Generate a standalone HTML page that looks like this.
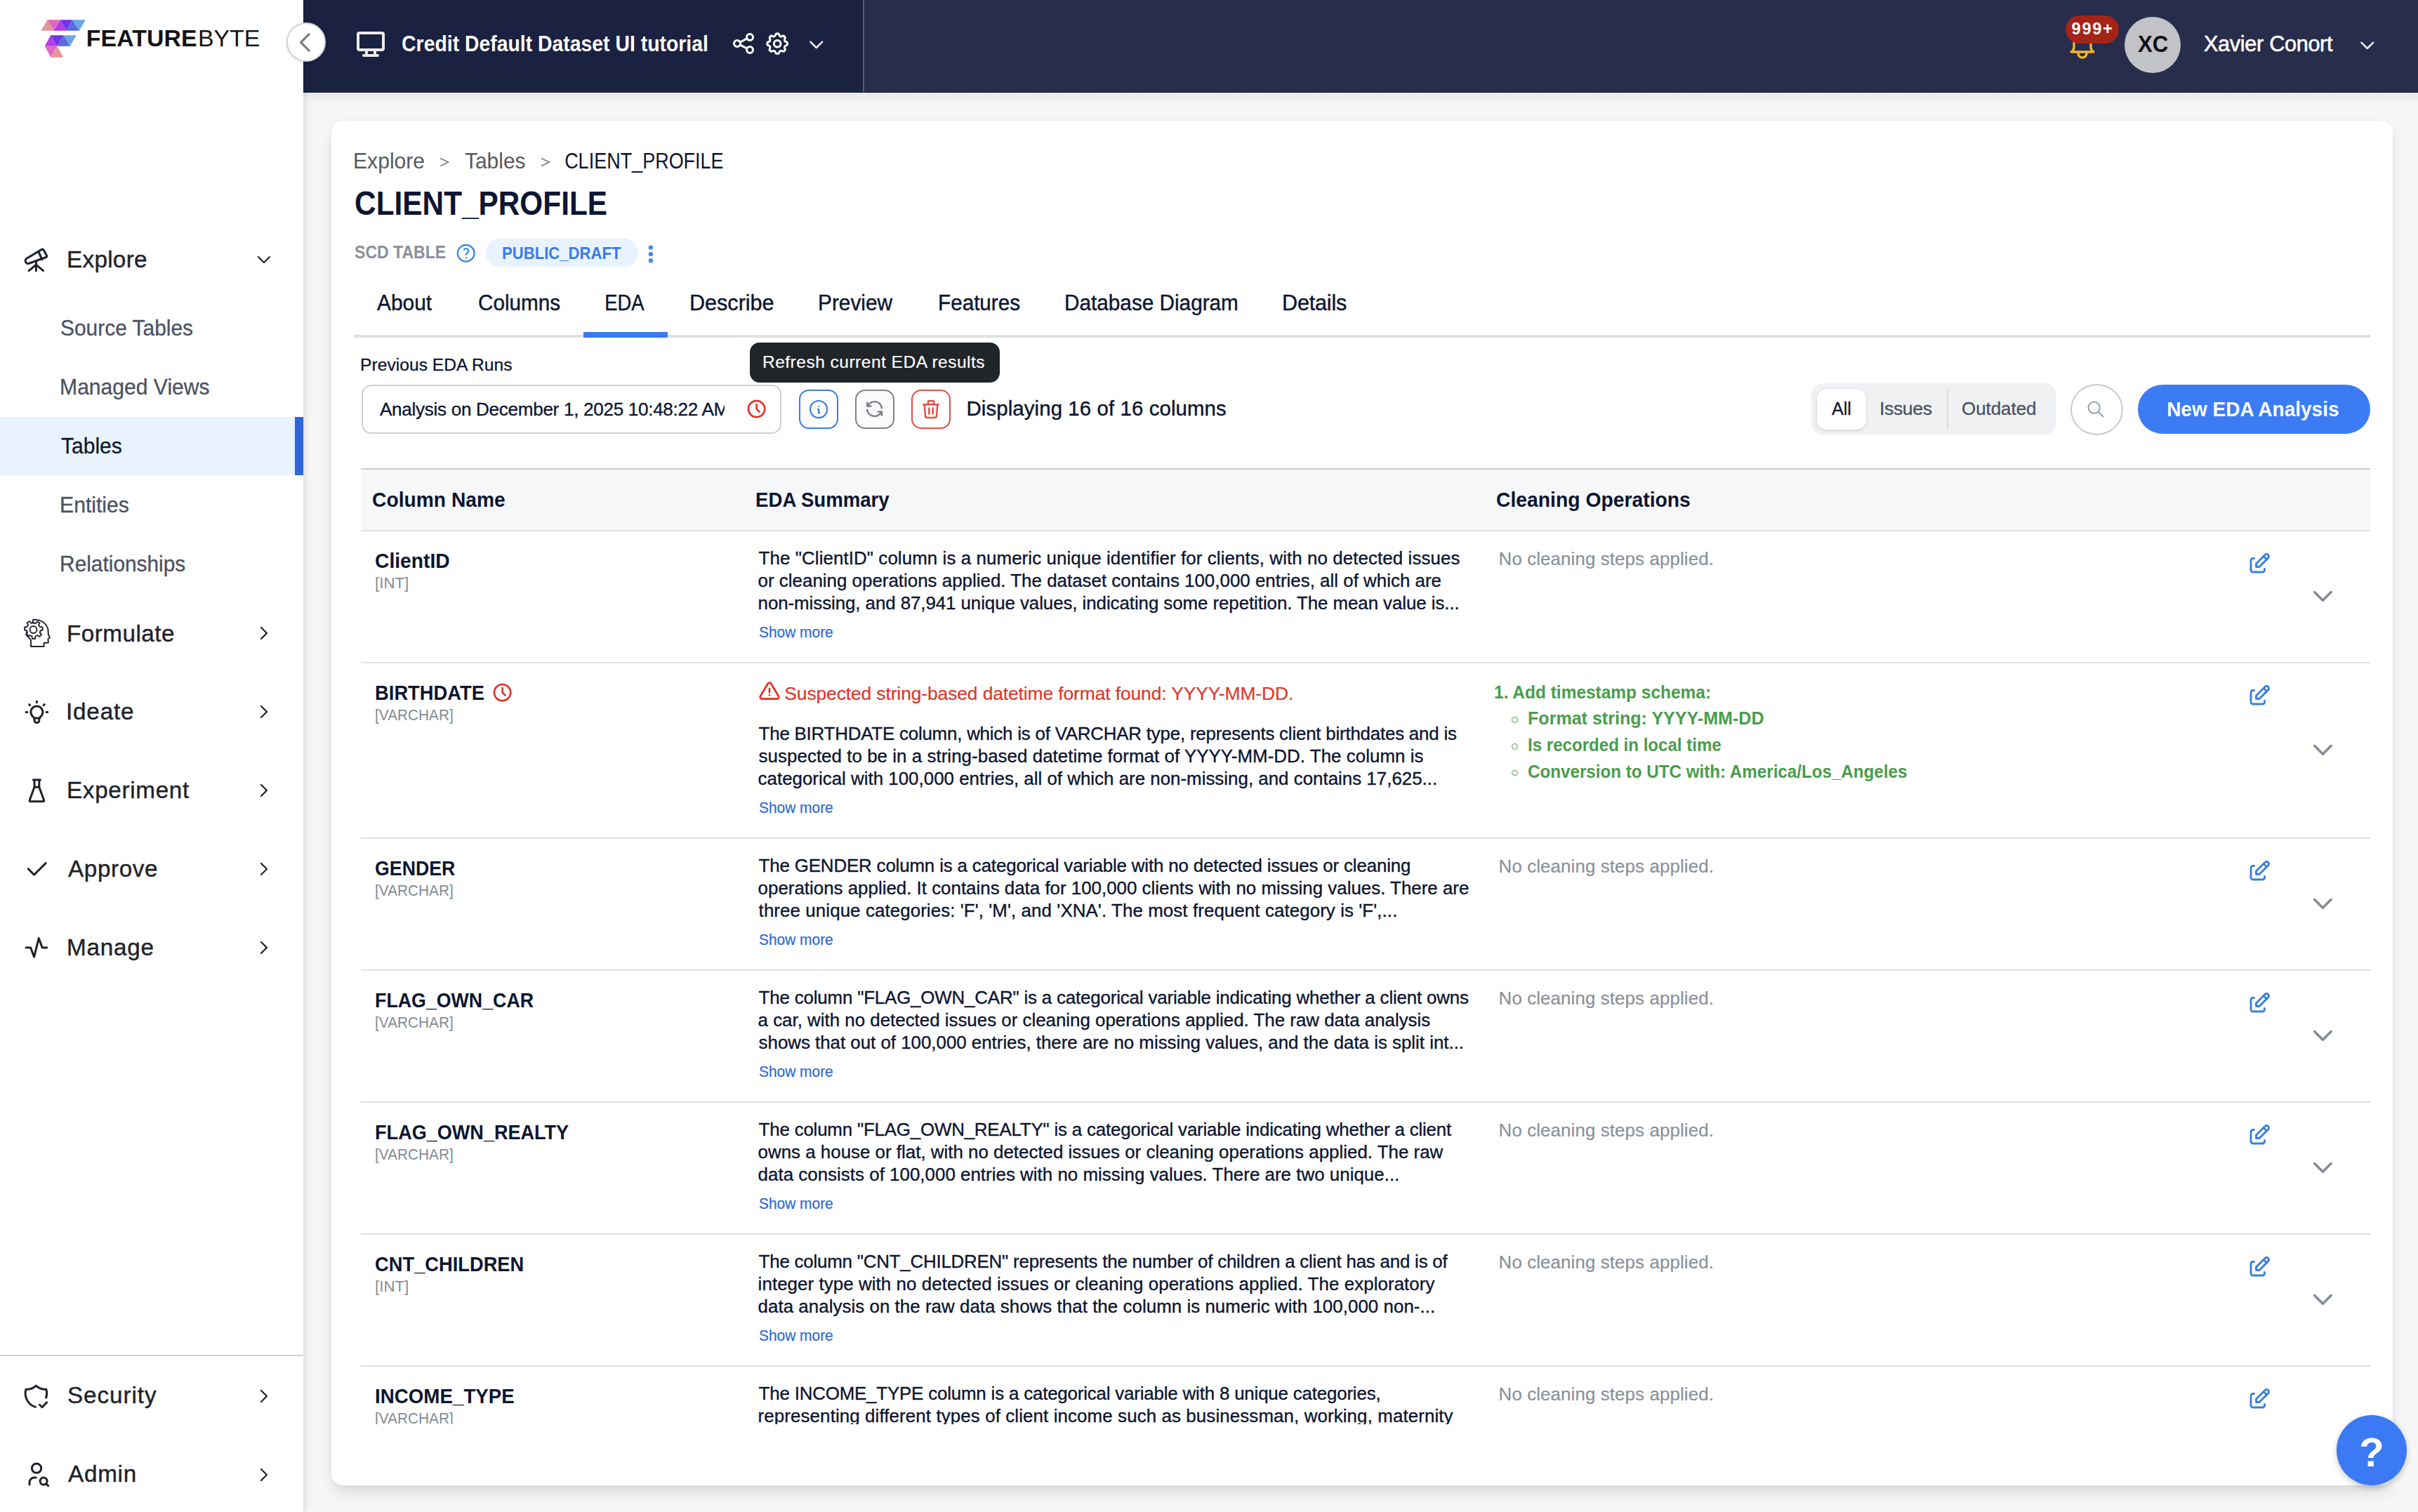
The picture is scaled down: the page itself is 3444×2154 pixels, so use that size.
<!DOCTYPE html>
<html><head><meta charset="utf-8"><title>CLIENT_PROFILE EDA</title>
<style>
html,body{margin:0;padding:0}
body{width:3444px;height:2154px;overflow:hidden;background:#f6f6f6;position:relative;font-family:"Liberation Sans",sans-serif}
.t{position:absolute;white-space:nowrap;z-index:4}
@media (max-width:1900px){body{zoom:0.5}}
</style></head><body>

<!-- sidebar -->
<div style="position:absolute;left:0;top:0;width:432px;height:2154px;background:#fff;z-index:2;box-shadow:2px 0 10px rgba(0,0,0,0.12)"></div>
<svg style="position:absolute;left:0;top:0;z-index:3" width="140" height="100" viewBox="0 0 140 100">
<polygon points="58.3,43.7 67.6,28.2 76.4,43.7" fill="#e39696"/>
<polygon points="67.6,28.2 85.9,28.2 76.4,43.7" fill="#e068c0"/>
<polygon points="76.4,43.7 85.9,28.2 94.7,43.7" fill="#b03ee6"/>
<polygon points="85.9,28.2 103.2,28.2 94.7,43.7" fill="#7433e6"/>
<polygon points="94.7,43.7 103.2,28.2 113,43.7" fill="#5a6ae0"/>
<polygon points="103.2,28.2 121.8,28.2 113,43.7" fill="#6aa6e0"/>
<polygon points="63.7,65.8 72.2,50.2 81.25,65.8" fill="#b03ee6"/>
<polygon points="72.2,50.2 90.5,50.2 81.25,65.8" fill="#7433e6"/>
<polygon points="81.25,65.8 90.5,50.2 99.8,65.8" fill="#5a6ae0"/>
<polygon points="90.5,50.2 108.6,50.2 99.8,65.8" fill="#6aa6e0"/>
<polygon points="63.7,65.8 81.25,65.8 72.5,81.8" fill="#e068c0"/>
<polygon points="72.5,81.8 81.25,65.8 90.5,81.8" fill="#e39696"/>
</svg>
<!-- selected item -->
<div style="position:absolute;left:0;top:594px;width:432px;height:83px;background:#e9f3fd;z-index:3"></div>
<div style="position:absolute;left:420px;top:594px;width:12px;height:83px;background:#2f66d9;z-index:3"></div>
<!-- sidebar separator -->
<div style="position:absolute;left:0;top:1930px;width:432px;height:2px;background:#cdd3db;z-index:3"></div>

<!-- header -->
<div style="position:absolute;left:432px;top:0;width:798px;height:132px;background:#1b2140;z-index:1"></div>
<div style="position:absolute;left:1230px;top:0;width:2214px;height:132px;background:#272d4a;z-index:1"></div>
<div style="position:absolute;left:1229px;top:0;width:2px;height:132px;background:#555b74;z-index:1"></div>
<div style="position:absolute;left:432px;top:131px;width:3012px;height:1px;background:#151a33;z-index:1"></div>
<div style="position:absolute;left:432px;top:132px;width:3012px;height:16px;background:linear-gradient(#e6e8eb,#f6f6f6);z-index:0"></div>
<!-- collapse button -->
<div style="position:absolute;left:408px;top:32px;width:52px;height:52px;border-radius:50%;background:#fff;border:2px solid #cfd4da;z-index:5;box-shadow:0 1px 4px rgba(0,0,0,0.12)"></div>
<!-- notifications -->
<div style="position:absolute;left:2942px;top:22px;width:76px;height:40px;border-radius:20px;background:#a52418;z-index:5"></div>
<div style="position:absolute;left:3026px;top:24px;width:80px;height:80px;border-radius:50%;background:#c2c3c7;z-index:4"></div>


<!-- card -->
<div style="position:absolute;left:472px;top:172px;width:2936px;height:1944px;background:#fff;border-radius:16px;z-index:1;box-shadow:0 12px 22px -4px rgba(0,0,0,0.13), 0 0 6px rgba(0,0,0,0.04)"></div>
<div style="position:absolute;left:691.6px;top:340px;width:217px;height:40px;border-radius:20px;background:#e8f3fd;z-index:2"></div>
<svg style="position:absolute;left:916px;top:345px;z-index:4" width="20" height="36" viewBox="916 345 20 36" fill="#4a8ae0"><circle cx="926.9" cy="352.6" r="3.2"/><circle cx="926.9" cy="361.9" r="3.2"/><circle cx="926.9" cy="371.2" r="3.2"/></svg>
<!-- tabs underline -->
<div style="position:absolute;left:504px;top:477px;width:2872px;height:4px;background:#dde0e5;z-index:2"></div>
<div style="position:absolute;left:831px;top:472.5px;width:120px;height:8.5px;background:#3a78f0;z-index:3"></div>
<!-- tooltip -->
<div style="position:absolute;left:1068px;top:488px;width:356px;height:56.5px;border-radius:14px;background:#212529;z-index:5"></div>
<!-- input -->
<div style="position:absolute;left:515px;top:547.7px;width:594px;height:66px;border-radius:14px;border:2px solid #cbd0d7;background:#fff;z-index:2"></div>
<!-- action buttons -->
<div style="position:absolute;left:1138px;top:555px;width:51.5px;height:52px;border-radius:14px;border:2px solid #3a7ddf;background:#fff;z-index:2"></div>
<div style="position:absolute;left:1218px;top:555px;width:51.5px;height:52px;border-radius:14px;border:2px solid #7d848c;background:#fbfbfc;z-index:2"></div>
<div style="position:absolute;left:1298px;top:555px;width:51.5px;height:52px;border-radius:14px;border:2px solid #e05048;background:#fff;z-index:2"></div>
<!-- segmented -->
<div style="position:absolute;left:2580px;top:545.6px;width:348px;height:73px;border-radius:16px;background:#f0f1f3;z-index:2"></div>
<div style="position:absolute;left:2588px;top:553.6px;width:70px;height:58px;border-radius:14px;background:#fff;z-index:3;box-shadow:0 1px 4px rgba(0,0,0,0.15)"></div>
<div style="position:absolute;left:2773px;top:554px;width:2px;height:57px;background:#d5d8dd;z-index:3"></div>
<!-- search -->
<div style="position:absolute;left:2949.3px;top:547.3px;width:71px;height:69px;border-radius:50%;border:2px solid #c5cad2;background:#fff;z-index:2"></div>

<!-- new eda -->
<div style="position:absolute;left:3044.5px;top:548px;width:331px;height:70px;border-radius:35px;background:#3b7cf4;z-index:2"></div>

<!-- table -->
<div style="position:absolute;left:514px;top:667px;width:2862px;height:2px;background:#c8ced6;z-index:2"></div>
<div style="position:absolute;left:514px;top:669px;width:2862px;height:86px;background:#f6f7f9;z-index:2"></div>
<div style="position:absolute;left:514px;top:755px;width:2862px;height:2px;background:#dcdfe4;z-index:2"></div>

<svg style="position:absolute;left:31.00px;top:349.50px;z-index:4;overflow:visible" width="40.80" height="40.80" viewBox="0 0 24 24" fill="none" stroke="#1f2329" stroke-width="1.765" stroke-linecap="round" stroke-linejoin="round"><path d="M6 21l6 -5l6 5"/><path d="M12 13v8"/><path d="M3.294 13.678l.166 .281c.52 .88 1.624 1.265 2.605 .91l14.242 -5.165a1.023 1.023 0 0 0 .565 -1.456l-2.62 -4.705a1.087 1.087 0 0 0 -1.447 -.42l-.056 .032l-12.694 7.618c-.975 .585 -1.341 1.866 -.76 2.905z"/><path d="M14 5l3 6.5"/></svg>
<svg style="position:absolute;left:360.00px;top:353.50px;z-index:4;overflow:visible" width="31.92" height="31.92" viewBox="0 0 24 24" fill="none" stroke="#1f2329" stroke-width="1.654" stroke-linecap="round" stroke-linejoin="round"><path d="M6 9l6 6l6 -6"/></svg>
<svg style="position:absolute;left:0;top:860px;z-index:4" width="100" height="80" viewBox="0 860 100 80" fill="none" stroke="#1f2329" stroke-width="1.9" stroke-linecap="round" stroke-linejoin="round"><path d="M47,882.8 C56,882 66,886 68.5,897 L68.8,903.5 L71,908.5 L68.5,910 L68.8,915.5 L62.5,916 L62.5,921 L44,921 L44,912 C40,907 38.5,904 37.8,901"/><path d="M46.5,884.5 L48,887.5 L51,888 L53,885.5 L56.5,887.5 L55,890.5 L57,893 L60.5,893.5 L60.8,897.5 L57.5,898.5 L56.8,901.5 L59,904 L56.5,907 L53.5,905 L50.5,906.5 L50,910 L46,910 L45.5,906.5 L42.5,905 L39.5,907 L37,904 L39,901.5 L38.3,898.5 L35,897.5 L35.2,893.5 L38.5,893 L40.2,890 L38.5,887 L42,885 L44,887.8 L46.5,887.5 Z"/><circle cx="47.5" cy="897" r="5"/></svg>
<svg style="position:absolute;left:31.60px;top:994.00px;z-index:4;overflow:visible" width="40.80" height="40.80" viewBox="0 0 24 24" fill="none" stroke="#1f2329" stroke-width="1.765" stroke-linecap="round" stroke-linejoin="round"><path d="M3 12h1m8 -9v1m8 8h1m-15.4 -6.4l.7 .7m12.1 -.7l-.7 .7"/><path d="M9 16a5 5 0 1 1 6 0a3.5 3.5 0 0 0 -1 3a2 2 0 0 1 -4 0a3.5 3.5 0 0 0 -1 -3"/><path d="M9.7 17l4.6 0"/></svg>
<svg style="position:absolute;left:31.60px;top:1105.80px;z-index:4;overflow:visible" width="40.80" height="40.80" viewBox="0 0 24 24" fill="none" stroke="#1f2329" stroke-width="1.765" stroke-linecap="round" stroke-linejoin="round"><path d="M9 3l6 0"/><path d="M10 9l4 0"/><path d="M10 3v6l-4 11a.7 .7 0 0 0 .5 1h11a.7 .7 0 0 0 .5 -1l-4 -11v-6"/></svg>
<svg style="position:absolute;left:32.00px;top:1218.00px;z-index:4;overflow:visible" width="39.84" height="39.84" viewBox="0 0 24 24" fill="none" stroke="#1f2329" stroke-width="1.807" stroke-linecap="round" stroke-linejoin="round"><path d="M5 12l5 5l10 -10"/></svg>
<svg style="position:absolute;left:31.50px;top:1330.00px;z-index:4;overflow:visible" width="39.84" height="39.84" viewBox="0 0 24 24" fill="none" stroke="#1f2329" stroke-width="1.807" stroke-linecap="round" stroke-linejoin="round"><path d="M3 12h4l3 8l4 -16l3 8h4"/></svg>
<svg style="position:absolute;left:30.80px;top:1968.50px;z-index:4;overflow:visible" width="40.80" height="40.80" viewBox="0 0 24 24" fill="none" stroke="#1f2329" stroke-width="1.765" stroke-linecap="round" stroke-linejoin="round"><path d="M11.46 20.846a12 12 0 0 1 -7.96 -14.846a12 12 0 0 0 8.5 -3a12 12 0 0 0 8.5 3a12 12 0 0 1 -.09 7.06"/><path d="M15 19l2 2l4 -4"/></svg>
<svg style="position:absolute;left:31.70px;top:2079.70px;z-index:4;overflow:visible" width="40.08" height="40.08" viewBox="0 0 24 24" fill="none" stroke="#1f2329" stroke-width="1.796" stroke-linecap="round" stroke-linejoin="round"><path d="M8 7a4 4 0 1 0 8 0a4 4 0 0 0 -8 0"/><path d="M6 21v-2a4 4 0 0 1 4 -4h1.5"/><path d="M18 18m-3 0a3 3 0 1 0 6 0a3 3 0 1 0 -6 0"/><path d="M20.2 20.2l1.8 1.8"/></svg>
<svg style="position:absolute;left:359.75px;top:886.00px;z-index:4;overflow:visible" width="31.99" height="31.99" viewBox="0 0 24 24" fill="none" stroke="#1f2329" stroke-width="1.650" stroke-linecap="round" stroke-linejoin="round"><path d="M9 6l6 6l-6 6"/></svg>
<svg style="position:absolute;left:359.75px;top:998.00px;z-index:4;overflow:visible" width="31.99" height="31.99" viewBox="0 0 24 24" fill="none" stroke="#1f2329" stroke-width="1.650" stroke-linecap="round" stroke-linejoin="round"><path d="M9 6l6 6l-6 6"/></svg>
<svg style="position:absolute;left:359.75px;top:1110.00px;z-index:4;overflow:visible" width="31.99" height="31.99" viewBox="0 0 24 24" fill="none" stroke="#1f2329" stroke-width="1.650" stroke-linecap="round" stroke-linejoin="round"><path d="M9 6l6 6l-6 6"/></svg>
<svg style="position:absolute;left:359.75px;top:1222.00px;z-index:4;overflow:visible" width="31.99" height="31.99" viewBox="0 0 24 24" fill="none" stroke="#1f2329" stroke-width="1.650" stroke-linecap="round" stroke-linejoin="round"><path d="M9 6l6 6l-6 6"/></svg>
<svg style="position:absolute;left:359.75px;top:1334.00px;z-index:4;overflow:visible" width="31.99" height="31.99" viewBox="0 0 24 24" fill="none" stroke="#1f2329" stroke-width="1.650" stroke-linecap="round" stroke-linejoin="round"><path d="M9 6l6 6l-6 6"/></svg>
<svg style="position:absolute;left:359.75px;top:1972.50px;z-index:4;overflow:visible" width="31.99" height="31.99" viewBox="0 0 24 24" fill="none" stroke="#1f2329" stroke-width="1.650" stroke-linecap="round" stroke-linejoin="round"><path d="M9 6l6 6l-6 6"/></svg>
<svg style="position:absolute;left:359.75px;top:2084.50px;z-index:4;overflow:visible" width="31.99" height="31.99" viewBox="0 0 24 24" fill="none" stroke="#1f2329" stroke-width="1.650" stroke-linecap="round" stroke-linejoin="round"><path d="M9 6l6 6l-6 6"/></svg>
<svg style="position:absolute;left:410.60px;top:36.80px;z-index:6;overflow:visible" width="46.80" height="46.80" viewBox="0 0 24 24" fill="none" stroke="#7e7e7e" stroke-width="1.641" stroke-linecap="round" stroke-linejoin="round"><path d="M15 6l-6 6l6 6"/></svg>
<svg style="position:absolute;left:600px;top:200px;z-index:4" width="200" height="60" viewBox="600 200 200 60" fill="none" stroke="#858a90" stroke-width="1.9" stroke-linejoin="miter"><path d="M627.3,225.6 L638.3,231 L627.3,236.4"/><path d="M771.1,225.6 L782.1,231 L771.1,236.4"/></svg>
<svg style="position:absolute;left:503.90px;top:38.80px;z-index:4;overflow:visible" width="48.00" height="48.00" viewBox="0 0 24 24" fill="none" stroke="#ebebeb" stroke-width="2.000" stroke-linecap="round" stroke-linejoin="round"><path d="M3 5a1 1 0 0 1 1 -1h16a1 1 0 0 1 1 1v10a1 1 0 0 1 -1 1h-16a1 1 0 0 1 -1 -1v-10z"/><path d="M7 20h10"/><path d="M9 16v4"/><path d="M15 16v4"/></svg>
<svg style="position:absolute;left:1040.90px;top:43.70px;z-index:4;overflow:visible" width="36.00" height="36.00" viewBox="0 0 24 24" fill="none" stroke="#ffffff" stroke-width="2.000" stroke-linecap="round" stroke-linejoin="round"><path d="M6 12m-3 0a3 3 0 1 0 6 0a3 3 0 1 0 -6 0"/><path d="M18 6m-3 0a3 3 0 1 0 6 0a3 3 0 1 0 -6 0"/><path d="M18 18m-3 0a3 3 0 1 0 6 0a3 3 0 1 0 -6 0"/><path d="M8.7 10.7l6.6 -3.4"/><path d="M8.7 13.3l6.6 3.4"/></svg>
<svg style="position:absolute;left:1087.80px;top:42.60px;z-index:4;overflow:visible" width="38.40" height="38.40" viewBox="0 0 24 24" fill="none" stroke="#ffffff" stroke-width="1.875" stroke-linecap="round" stroke-linejoin="round"><path d="M10.325 4.317c.426 -1.756 2.924 -1.756 3.35 0a1.724 1.724 0 0 0 2.573 1.066c1.543 -.94 3.31 .826 2.37 2.37a1.724 1.724 0 0 0 1.065 2.572c1.756 .426 1.756 2.924 0 3.35a1.724 1.724 0 0 0 -1.066 2.573c.94 1.543 -.826 3.31 -2.37 2.37a1.724 1.724 0 0 0 -2.572 1.065c-.426 1.756 -2.924 1.756 -3.35 0a1.724 1.724 0 0 0 -2.573 -1.066c-1.543 .94 -3.31 -.826 -2.37 -2.37a1.724 1.724 0 0 0 -1.065 -2.572c-1.756 -.426 -1.756 -2.924 0 -3.35a1.724 1.724 0 0 0 1.066 -2.573c-.94 -1.543 .826 -3.31 2.37 -2.37c1 .608 2.296 .07 2.572 -1.065z"/><path d="M9 12a3 3 0 1 0 6 0a3 3 0 0 0 -6 0"/></svg>
<svg style="position:absolute;left:1146.20px;top:47.20px;z-index:4;overflow:visible" width="33.60" height="33.60" viewBox="0 0 24 24" fill="none" stroke="#e8e8e8" stroke-width="1.857" stroke-linecap="round" stroke-linejoin="round"><path d="M6 9l6 6l6 -6"/></svg>
<svg style="position:absolute;left:2942.00px;top:39.70px;z-index:4;overflow:visible" width="48.00" height="48.00" viewBox="0 0 24 24" fill="none" stroke="#f0b232" stroke-width="1.700" stroke-linecap="round" stroke-linejoin="round"><path d="M10 5a2 2 0 1 1 4 0a7 7 0 0 1 4 6v3a4 4 0 0 0 2 3h-16a4 4 0 0 0 2 -3v-3a7 7 0 0 1 4 -6"/><path d="M9 17v1a3 3 0 0 0 6 0v-1"/></svg>
<svg style="position:absolute;left:3354.70px;top:47.70px;z-index:4;overflow:visible" width="33.60" height="33.60" viewBox="0 0 24 24" fill="none" stroke="#e8e8e8" stroke-width="1.857" stroke-linecap="round" stroke-linejoin="round"><path d="M6 9l6 6l6 -6"/></svg>
<svg style="position:absolute;left:648.10px;top:344.70px;z-index:4;overflow:visible" width="31.44" height="31.44" viewBox="0 0 24 24" fill="none" stroke="#3d8ddf" stroke-width="1.832" stroke-linecap="round" stroke-linejoin="round"><path d="M3 12a9 9 0 1 0 18 0a9 9 0 0 0 -18 0"/><path d="M12 17l0 .01"/><path d="M12 13.5a1.5 1.5 0 0 1 1 -1.5a2.6 2.6 0 1 0 -3 -4"/></svg>
<svg style="position:absolute;left:1061.90px;top:567.40px;z-index:4;overflow:visible" width="31.20" height="31.20" viewBox="0 0 24 24" fill="none" stroke="#e3302a" stroke-width="2.000" stroke-linecap="round" stroke-linejoin="round"><path d="M3 12a9 9 0 1 0 18 0a9 9 0 0 0 -18 0"/><path d="M12 7v5l3 3"/></svg>
<svg style="position:absolute;left:1149.90px;top:566.60px;z-index:4;overflow:visible" width="32.16" height="32.16" viewBox="0 0 24 24" fill="none" stroke="#3a7ddf" stroke-width="1.642" stroke-linecap="round" stroke-linejoin="round"><path d="M3 12a9 9 0 1 0 18 0a9 9 0 0 0 -18 0"/><path d="M12 9h.01"/><path d="M11 12h1v4h1"/></svg>
<svg style="position:absolute;left:1230.40px;top:567.10px;z-index:4;overflow:visible" width="31.20" height="31.20" viewBox="0 0 24 24" fill="none" stroke="#7d848c" stroke-width="2.000" stroke-linecap="round" stroke-linejoin="round"><path d="M20 11a8.1 8.1 0 0 0 -15.5 -2m-.5 -4v4h4"/><path d="M4 13a8.1 8.1 0 0 0 15.5 2m.5 4v-4h-4"/></svg>
<svg style="position:absolute;left:1310.00px;top:567.30px;z-index:4;overflow:visible" width="31.92" height="31.92" viewBox="0 0 24 24" fill="none" stroke="#e05048" stroke-width="1.880" stroke-linecap="round" stroke-linejoin="round"><path d="M4 7l16 0"/><path d="M10 11l0 6"/><path d="M14 11l0 6"/><path d="M5 7l1 12a2 2 0 0 0 2 2h8a2 2 0 0 0 2 -2l1 -12"/><path d="M9 7v-3a1 1 0 0 1 1 -1h4a1 1 0 0 1 1 1v3"/></svg>
<svg style="position:absolute;left:2970.70px;top:568.80px;z-index:4;overflow:visible" width="28.08" height="28.08" viewBox="0 0 24 24" fill="none" stroke="#9ca2aa" stroke-width="1.795" stroke-linecap="round" stroke-linejoin="round"><path d="M10 10m-7 0a7 7 0 1 0 14 0a7 7 0 1 0 -14 0"/><path d="M21 21l-6 -6"/></svg>
<div style="position:absolute;left:514px;top:943px;width:2862px;height:2px;background:#dfe2e6;z-index:2"></div>
<svg style="position:absolute;left:3200.00px;top:784.90px;z-index:4;overflow:visible" width="36.00" height="36.00" viewBox="0 0 24 24" fill="none" stroke="#3a80dc" stroke-width="1.933" stroke-linecap="round" stroke-linejoin="round"><path d="M7 7h-1a2 2 0 0 0 -2 2v9a2 2 0 0 0 2 2h9a2 2 0 0 0 2 -2v-1"/><path d="M20.385 6.585a2.1 2.1 0 0 0 -2.97 -2.97l-8.415 8.385v3h3l8.385 -8.415z"/><path d="M16 5l3 3"/></svg>
<svg style="position:absolute;left:3284.90px;top:825.60px;z-index:4;overflow:visible" width="46.80" height="46.80" viewBox="0 0 24 24" fill="none" stroke="#868c94" stroke-width="1.846" stroke-linecap="round" stroke-linejoin="round"><path d="M6 9l6 6l6 -6"/></svg>
<div style="position:absolute;left:514px;top:1193px;width:2862px;height:2px;background:#dfe2e6;z-index:2"></div>
<svg style="position:absolute;left:3200.00px;top:972.90px;z-index:4;overflow:visible" width="36.00" height="36.00" viewBox="0 0 24 24" fill="none" stroke="#3a80dc" stroke-width="1.933" stroke-linecap="round" stroke-linejoin="round"><path d="M7 7h-1a2 2 0 0 0 -2 2v9a2 2 0 0 0 2 2h9a2 2 0 0 0 2 -2v-1"/><path d="M20.385 6.585a2.1 2.1 0 0 0 -2.97 -2.97l-8.415 8.385v3h3l8.385 -8.415z"/><path d="M16 5l3 3"/></svg>
<svg style="position:absolute;left:3284.90px;top:1044.60px;z-index:4;overflow:visible" width="46.80" height="46.80" viewBox="0 0 24 24" fill="none" stroke="#868c94" stroke-width="1.846" stroke-linecap="round" stroke-linejoin="round"><path d="M6 9l6 6l6 -6"/></svg>
<svg style="position:absolute;left:700.40px;top:971.20px;z-index:4;overflow:visible" width="31.20" height="31.20" viewBox="0 0 24 24" fill="none" stroke="#e52b1c" stroke-width="1.923" stroke-linecap="round" stroke-linejoin="round"><path d="M3 12a9 9 0 1 0 18 0a9 9 0 0 0 -18 0"/><path d="M12 7v5l3 3"/></svg>
<svg style="position:absolute;left:1079.70px;top:969.20px;z-index:4;overflow:visible" width="31.92" height="31.92" viewBox="0 0 24 24" fill="none" stroke="#e52b1c" stroke-width="1.955" stroke-linecap="round" stroke-linejoin="round"><path d="M12 9v4"/><path d="M10.363 3.591l-8.106 13.534a1.914 1.914 0 0 0 1.636 2.871h16.214a1.914 1.914 0 0 0 1.636 -2.87l-8.106 -13.536a1.914 1.914 0 0 0 -3.274 0z"/><path d="M12 16h.01"/></svg>
<div style="position:absolute;left:2153.2px;top:1021.1000000000001px;width:6.9px;height:6.9px;border:1.4px solid #4a9d4c;border-radius:50%;z-index:4"></div>
<div style="position:absolute;left:2153.2px;top:1058.8000000000002px;width:6.9px;height:6.9px;border:1.4px solid #4a9d4c;border-radius:50%;z-index:4"></div>
<div style="position:absolute;left:2153.2px;top:1096.5000000000002px;width:6.9px;height:6.9px;border:1.4px solid #4a9d4c;border-radius:50%;z-index:4"></div>
<div style="position:absolute;left:514px;top:1381px;width:2862px;height:2px;background:#dfe2e6;z-index:2"></div>
<svg style="position:absolute;left:3200.00px;top:1222.90px;z-index:4;overflow:visible" width="36.00" height="36.00" viewBox="0 0 24 24" fill="none" stroke="#3a80dc" stroke-width="1.933" stroke-linecap="round" stroke-linejoin="round"><path d="M7 7h-1a2 2 0 0 0 -2 2v9a2 2 0 0 0 2 2h9a2 2 0 0 0 2 -2v-1"/><path d="M20.385 6.585a2.1 2.1 0 0 0 -2.97 -2.97l-8.415 8.385v3h3l8.385 -8.415z"/><path d="M16 5l3 3"/></svg>
<svg style="position:absolute;left:3284.90px;top:1263.60px;z-index:4;overflow:visible" width="46.80" height="46.80" viewBox="0 0 24 24" fill="none" stroke="#868c94" stroke-width="1.846" stroke-linecap="round" stroke-linejoin="round"><path d="M6 9l6 6l6 -6"/></svg>
<div style="position:absolute;left:514px;top:1569px;width:2862px;height:2px;background:#dfe2e6;z-index:2"></div>
<svg style="position:absolute;left:3200.00px;top:1410.90px;z-index:4;overflow:visible" width="36.00" height="36.00" viewBox="0 0 24 24" fill="none" stroke="#3a80dc" stroke-width="1.933" stroke-linecap="round" stroke-linejoin="round"><path d="M7 7h-1a2 2 0 0 0 -2 2v9a2 2 0 0 0 2 2h9a2 2 0 0 0 2 -2v-1"/><path d="M20.385 6.585a2.1 2.1 0 0 0 -2.97 -2.97l-8.415 8.385v3h3l8.385 -8.415z"/><path d="M16 5l3 3"/></svg>
<svg style="position:absolute;left:3284.90px;top:1451.60px;z-index:4;overflow:visible" width="46.80" height="46.80" viewBox="0 0 24 24" fill="none" stroke="#868c94" stroke-width="1.846" stroke-linecap="round" stroke-linejoin="round"><path d="M6 9l6 6l6 -6"/></svg>
<div style="position:absolute;left:514px;top:1757px;width:2862px;height:2px;background:#dfe2e6;z-index:2"></div>
<svg style="position:absolute;left:3200.00px;top:1598.90px;z-index:4;overflow:visible" width="36.00" height="36.00" viewBox="0 0 24 24" fill="none" stroke="#3a80dc" stroke-width="1.933" stroke-linecap="round" stroke-linejoin="round"><path d="M7 7h-1a2 2 0 0 0 -2 2v9a2 2 0 0 0 2 2h9a2 2 0 0 0 2 -2v-1"/><path d="M20.385 6.585a2.1 2.1 0 0 0 -2.97 -2.97l-8.415 8.385v3h3l8.385 -8.415z"/><path d="M16 5l3 3"/></svg>
<svg style="position:absolute;left:3284.90px;top:1639.60px;z-index:4;overflow:visible" width="46.80" height="46.80" viewBox="0 0 24 24" fill="none" stroke="#868c94" stroke-width="1.846" stroke-linecap="round" stroke-linejoin="round"><path d="M6 9l6 6l6 -6"/></svg>
<div style="position:absolute;left:514px;top:1945px;width:2862px;height:2px;background:#dfe2e6;z-index:2"></div>
<svg style="position:absolute;left:3200.00px;top:1786.90px;z-index:4;overflow:visible" width="36.00" height="36.00" viewBox="0 0 24 24" fill="none" stroke="#3a80dc" stroke-width="1.933" stroke-linecap="round" stroke-linejoin="round"><path d="M7 7h-1a2 2 0 0 0 -2 2v9a2 2 0 0 0 2 2h9a2 2 0 0 0 2 -2v-1"/><path d="M20.385 6.585a2.1 2.1 0 0 0 -2.97 -2.97l-8.415 8.385v3h3l8.385 -8.415z"/><path d="M16 5l3 3"/></svg>
<svg style="position:absolute;left:3284.90px;top:1827.60px;z-index:4;overflow:visible" width="46.80" height="46.80" viewBox="0 0 24 24" fill="none" stroke="#868c94" stroke-width="1.846" stroke-linecap="round" stroke-linejoin="round"><path d="M6 9l6 6l6 -6"/></svg>
<svg style="position:absolute;left:3200.00px;top:1974.90px;z-index:4;overflow:visible" width="36.00" height="36.00" viewBox="0 0 24 24" fill="none" stroke="#3a80dc" stroke-width="1.933" stroke-linecap="round" stroke-linejoin="round"><path d="M7 7h-1a2 2 0 0 0 -2 2v9a2 2 0 0 0 2 2h9a2 2 0 0 0 2 -2v-1"/><path d="M20.385 6.585a2.1 2.1 0 0 0 -2.97 -2.97l-8.415 8.385v3h3l8.385 -8.415z"/><path d="M16 5l3 3"/></svg>
<svg style="position:absolute;left:3284.90px;top:2015.60px;z-index:4;overflow:visible" width="46.80" height="46.80" viewBox="0 0 24 24" fill="none" stroke="#868c94" stroke-width="1.846" stroke-linecap="round" stroke-linejoin="round"><path d="M6 9l6 6l6 -6"/></svg>
<div style="position:absolute;left:514px;top:2029px;width:2862px;height:72px;background:#fff;z-index:5"></div>
<div style="position:absolute;left:3328px;top:2016px;width:100px;height:100px;border-radius:50%;background:#3b7af4;z-index:7;box-shadow:0 3px 8px rgba(0,0,0,0.22)"></div>
<div style="position:absolute;left:3328px;top:2039.90px;width:100px;text-align:center;font-size:58px;line-height:58px;font-weight:bold;color:#fff;z-index:8;letter-spacing:0">?</div>
<div class="t" id="t0" style="left:122.70px;top:37.98px;font-size:33.81px;line-height:33.81px;color:#141414;font-weight:bold;letter-spacing:0.126px">FEATURE</div>
<div class="t" id="t1" style="left:282.00px;top:37.98px;font-size:33.81px;line-height:33.81px;color:#141414;letter-spacing:-0.010px">BYTE</div>
<div class="t" id="t2" style="left:571.70px;top:47.13px;font-size:31.27px;line-height:31.27px;color:#ffffff;font-weight:bold;transform:scaleX(0.9076);transform-origin:1.00px 0">Credit Default Dataset UI tutorial</div>
<div class="t" id="t3" style="left:2950.60px;top:29.96px;font-size:23.67px;line-height:23.67px;color:#ffffff;font-weight:bold;letter-spacing:1.644px;z-index:6">999+</div>
<div class="t" id="t4" style="left:3044.70px;top:46.98px;font-size:32.75px;line-height:32.75px;color:#101010;font-weight:bold;transform:scaleX(0.9522);transform-origin:0.00px 0">XC</div>
<div class="t" id="t5" style="left:3139.00px;top:47.06px;font-size:30.64px;line-height:30.64px;color:#ffffff;letter-spacing:-0.310px;-webkit-text-stroke:0.6px #fff">Xavier Conort</div>
<div class="t" id="t6" style="left:95.00px;top:352.83px;font-size:33.28px;line-height:33.28px;color:#1f2329;letter-spacing:0.285px;-webkit-text-stroke:0.4px #1f2329">Explore</div>
<div class="t" id="t7" style="left:86.00px;top:452.11px;font-size:31.17px;line-height:31.17px;color:#4b5262;transform:scaleX(0.9599);transform-origin:1.00px 0;-webkit-text-stroke:0.3px #4b5262">Source Tables</div>
<div class="t" id="t8" style="left:85.00px;top:536.21px;font-size:31.17px;line-height:31.17px;color:#4b5262;transform:scaleX(0.9655);transform-origin:2.00px 0;-webkit-text-stroke:0.3px #4b5262">Managed Views</div>
<div class="t" id="t9" style="left:87.00px;top:619.61px;font-size:31.17px;line-height:31.17px;color:#0f1a35;transform:scaleX(0.9644);transform-origin:0.00px 0;-webkit-text-stroke:0.3px #0f1a35">Tables</div>
<div class="t" id="t10" style="left:85.00px;top:703.61px;font-size:31.17px;line-height:31.17px;color:#4b5262;transform:scaleX(0.9669);transform-origin:2.00px 0;-webkit-text-stroke:0.3px #4b5262">Entities</div>
<div class="t" id="t11" style="left:85.00px;top:787.61px;font-size:31.17px;line-height:31.17px;color:#4b5262;transform:scaleX(0.9579);transform-origin:2.00px 0;-webkit-text-stroke:0.3px #4b5262">Relationships</div>
<div class="t" id="t12" style="left:95.00px;top:885.53px;font-size:33.28px;line-height:33.28px;color:#1f2329;letter-spacing:0.470px;-webkit-text-stroke:0.4px #1f2329">Formulate</div>
<div class="t" id="t13" style="left:94.00px;top:996.63px;font-size:33.28px;line-height:33.28px;color:#1f2329;letter-spacing:0.803px;-webkit-text-stroke:0.4px #1f2329">Ideate</div>
<div class="t" id="t14" style="left:95.00px;top:1108.83px;font-size:33.28px;line-height:33.28px;color:#1f2329;letter-spacing:0.666px;-webkit-text-stroke:0.4px #1f2329">Experiment</div>
<div class="t" id="t15" style="left:97.00px;top:1220.83px;font-size:33.28px;line-height:33.28px;color:#1f2329;letter-spacing:0.600px;-webkit-text-stroke:0.4px #1f2329">Approve</div>
<div class="t" id="t16" style="left:95.00px;top:1332.53px;font-size:33.28px;line-height:33.28px;color:#1f2329;letter-spacing:0.757px;-webkit-text-stroke:0.4px #1f2329">Manage</div>
<div class="t" id="t17" style="left:96.00px;top:1971.43px;font-size:33.28px;line-height:33.28px;color:#1f2329;letter-spacing:0.924px;-webkit-text-stroke:0.4px #1f2329">Security</div>
<div class="t" id="t18" style="left:97.00px;top:2083.43px;font-size:33.28px;line-height:33.28px;color:#1f2329;letter-spacing:0.728px;-webkit-text-stroke:0.4px #1f2329">Admin</div>
<div class="t" id="t19" style="left:503.00px;top:214.11px;font-size:31.06px;line-height:31.06px;color:#58595c;transform:scaleX(0.9686);transform-origin:2.00px 0">Explore</div>
<div class="t" id="t20" style="left:661.60px;top:214.11px;font-size:31.06px;line-height:31.06px;color:#58595c;transform:scaleX(0.9639);transform-origin:0.00px 0">Tables</div>
<div class="t" id="t21" style="left:804.00px;top:214.11px;font-size:31.06px;line-height:31.06px;color:#0d1530;transform:scaleX(0.8694);transform-origin:1.00px 0">CLIENT_PROFILE</div>
<div class="t" id="t22" style="left:504.50px;top:266.26px;font-size:47.54px;line-height:47.54px;color:#0d1530;font-weight:bold;transform:scaleX(0.8908);transform-origin:1.00px 0">CLIENT_PROFILE</div>
<div class="t" id="t23" style="left:505.00px;top:346.80px;font-size:25.04px;line-height:25.04px;color:#8a9099;font-weight:bold;transform:scaleX(0.9212);transform-origin:0.00px 0">SCD TABLE</div>
<div class="t" id="t24" style="left:714.70px;top:349.53px;font-size:23.24px;line-height:23.24px;color:#3a7be8;font-weight:bold;transform:scaleX(0.9512);transform-origin:1.00px 0">PUBLIC_DRAFT</div>
<div class="t" id="t25" style="left:537.00px;top:415.56px;font-size:30.64px;line-height:30.64px;color:#0d1530;transform:scaleX(0.9761);transform-origin:0.00px 0;-webkit-text-stroke:0.4px #0d1530">About</div>
<div class="t" id="t26" style="left:680.80px;top:415.56px;font-size:30.64px;line-height:30.64px;color:#0d1530;transform:scaleX(0.9697);transform-origin:1.00px 0;-webkit-text-stroke:0.4px #0d1530">Columns</div>
<div class="t" id="t27" style="left:861.00px;top:415.56px;font-size:30.64px;line-height:30.64px;color:#0d1530;transform:scaleX(0.8937);transform-origin:2.00px 0;-webkit-text-stroke:0.4px #0d1530">EDA</div>
<div class="t" id="t28" style="left:982.00px;top:415.56px;font-size:30.64px;line-height:30.64px;color:#0d1530;letter-spacing:-0.030px;-webkit-text-stroke:0.4px #0d1530">Describe</div>
<div class="t" id="t29" style="left:1165.00px;top:415.56px;font-size:30.64px;line-height:30.64px;color:#0d1530;transform:scaleX(0.9721);transform-origin:2.00px 0;-webkit-text-stroke:0.4px #0d1530">Preview</div>
<div class="t" id="t30" style="left:1336.00px;top:415.56px;font-size:30.64px;line-height:30.64px;color:#0d1530;transform:scaleX(0.9676);transform-origin:2.00px 0;-webkit-text-stroke:0.4px #0d1530">Features</div>
<div class="t" id="t31" style="left:1516.00px;top:415.56px;font-size:30.64px;line-height:30.64px;color:#0d1530;transform:scaleX(0.9705);transform-origin:2.00px 0;-webkit-text-stroke:0.4px #0d1530">Database Diagram</div>
<div class="t" id="t32" style="left:1826.00px;top:415.56px;font-size:30.64px;line-height:30.64px;color:#0d1530;letter-spacing:-0.216px;-webkit-text-stroke:0.4px #0d1530">Details</div>
<div class="t" id="t33" style="left:513.00px;top:508.16px;font-size:24.62px;line-height:24.62px;color:#0d1530;letter-spacing:0.027px;-webkit-text-stroke:0.3px #0d1530">Previous EDA Runs</div>
<div class="t" id="t34" style="left:1086.00px;top:504.15px;font-size:24.51px;line-height:24.51px;color:#ffffff;letter-spacing:0.498px;z-index:6;-webkit-text-stroke:0.2px #fff">Refresh current EDA results</div>
<div class="t" id="t35" style="left:541.00px;top:569.91px;font-size:26.10px;line-height:26.10px;color:#0d1530;letter-spacing:-0.304px;clip-path:inset(-10px 6px -10px -10px);-webkit-text-stroke:0.3px #0d1530">Analysis on December 1, 2025 10:48:22 AM</div>
<div class="t" id="t36" style="left:1376.50px;top:567.44px;font-size:29.37px;line-height:29.37px;color:#0d1530;letter-spacing:0.115px;-webkit-text-stroke:0.4px #0d1530">Displaying 16 of 16 columns</div>
<div class="t" id="t37" style="left:2608.60px;top:569.27px;font-size:26.62px;line-height:26.62px;color:#0d1530;transform:scaleX(0.9456);transform-origin:0.00px 0;-webkit-text-stroke:0.3px #0d1530">All</div>
<div class="t" id="t38" style="left:2677.00px;top:569.27px;font-size:26.62px;line-height:26.62px;color:#4a5260;letter-spacing:-0.380px;-webkit-text-stroke:0.3px #4a5260">Issues</div>
<div class="t" id="t39" style="left:2794.00px;top:569.27px;font-size:26.62px;line-height:26.62px;color:#4a5260;transform:scaleX(0.9723);transform-origin:1.00px 0;-webkit-text-stroke:0.3px #4a5260">Outdated</div>
<div class="t" id="t40" style="left:3086.00px;top:567.93px;font-size:30.32px;line-height:30.32px;color:#ffffff;font-weight:bold;transform:scaleX(0.9238);transform-origin:2.00px 0">New EDA Analysis</div>
<div class="t" id="t41" style="left:530.00px;top:697.44px;font-size:29.37px;line-height:29.37px;color:#0d1530;font-weight:bold;transform:scaleX(0.9614);transform-origin:1.00px 0">Column Name</div>
<div class="t" id="t42" style="left:1075.70px;top:697.44px;font-size:29.37px;line-height:29.37px;color:#0d1530;font-weight:bold;transform:scaleX(0.9395);transform-origin:1.00px 0">EDA Summary</div>
<div class="t" id="t43" style="left:2131.00px;top:697.44px;font-size:29.37px;line-height:29.37px;color:#0d1530;font-weight:bold;transform:scaleX(0.9640);transform-origin:1.00px 0">Cleaning Operations</div>
<div class="t" id="t44" style="left:534.00px;top:784.16px;font-size:29.58px;line-height:29.58px;color:#0d1530;font-weight:bold;transform:scaleX(0.9540);transform-origin:1.00px 0">ClientID</div>
<div class="t" id="t45" style="left:534.00px;top:819.52px;font-size:22.19px;line-height:22.19px;color:#848b94;letter-spacing:0.024px">[INT]</div>
<div class="t" id="t46" style="left:1080.60px;top:783.09px;font-size:25.88px;line-height:25.88px;color:#0d1530;letter-spacing:0.093px;-webkit-text-stroke:0.35px #0d1530">The "ClientID" column is a numeric unique identifier for clients, with no detected issues</div>
<div class="t" id="t47" style="left:1079.60px;top:815.09px;font-size:25.88px;line-height:25.88px;color:#0d1530;letter-spacing:0.017px;-webkit-text-stroke:0.35px #0d1530">or cleaning operations applied. The dataset contains 100,000 entries, all of which are</div>
<div class="t" id="t48" style="left:1079.60px;top:847.09px;font-size:25.88px;line-height:25.88px;color:#0d1530;letter-spacing:-0.068px;-webkit-text-stroke:0.35px #0d1530">non-missing, and 87,941 unique values, indicating some repetition. The mean value is...</div>
<div class="t" id="t49" style="left:1080.60px;top:889.96px;font-size:21.66px;line-height:21.66px;color:#2f6bd9;transform:scaleX(0.9654);transform-origin:0.00px 0;-webkit-text-stroke:0.25px #2f6bd9">Show more</div>
<div class="t" id="t50" style="left:2134.60px;top:784.09px;font-size:25.88px;line-height:25.88px;color:#8a9099;letter-spacing:0.111px;-webkit-text-stroke:0.2px #8a9099">No cleaning steps applied.</div>
<div class="t" id="t51" style="left:534.00px;top:972.16px;font-size:29.58px;line-height:29.58px;color:#0d1530;font-weight:bold;transform:scaleX(0.9236);transform-origin:1.00px 0">BIRTHDATE</div>
<div class="t" id="t52" style="left:534.00px;top:1007.52px;font-size:22.19px;line-height:22.19px;color:#848b94;transform:scaleX(0.9367);transform-origin:1.00px 0">[VARCHAR]</div>
<div class="t" id="t53" style="left:1117.30px;top:974.64px;font-size:26.41px;line-height:26.41px;color:#e0352b;letter-spacing:-0.106px;-webkit-text-stroke:0.2px #e0352b">Suspected string-based datetime format found: YYYY-MM-DD.</div>
<div class="t" id="t54" style="left:1080.60px;top:1032.89px;font-size:25.88px;line-height:25.88px;color:#0d1530;letter-spacing:-0.203px;-webkit-text-stroke:0.35px #0d1530">The BIRTHDATE column, which is of VARCHAR type, represents client birthdates and is</div>
<div class="t" id="t55" style="left:1080.60px;top:1064.89px;font-size:25.88px;line-height:25.88px;color:#0d1530;letter-spacing:0.051px;-webkit-text-stroke:0.35px #0d1530">suspected to be in a string-based datetime format of YYYY-MM-DD. The column is</div>
<div class="t" id="t56" style="left:1079.60px;top:1096.89px;font-size:25.88px;line-height:25.88px;color:#0d1530;letter-spacing:0.012px;-webkit-text-stroke:0.35px #0d1530">categorical with 100,000 entries, all of which are non-missing, and contains 17,625...</div>
<div class="t" id="t57" style="left:1080.60px;top:1139.76px;font-size:21.66px;line-height:21.66px;color:#2f6bd9;transform:scaleX(0.9654);transform-origin:0.00px 0;-webkit-text-stroke:0.25px #2f6bd9">Show more</div>
<div class="t" id="t58" style="left:2127.50px;top:974.29px;font-size:25.88px;line-height:25.88px;color:#4a9d4c;font-weight:bold;transform:scaleX(0.9455);transform-origin:1.00px 0">1. Add timestamp schema:</div>
<div class="t" id="t59" style="left:2175.70px;top:1011.49px;font-size:25.88px;line-height:25.88px;color:#4a9d4c;font-weight:bold;transform:scaleX(0.9685);transform-origin:1.00px 0">Format string: YYYY-MM-DD</div>
<div class="t" id="t60" style="left:2175.70px;top:1049.19px;font-size:25.88px;line-height:25.88px;color:#4a9d4c;font-weight:bold;transform:scaleX(0.9304);transform-origin:1.00px 0">Is recorded in local time</div>
<div class="t" id="t61" style="left:2175.70px;top:1086.89px;font-size:25.88px;line-height:25.88px;color:#4a9d4c;font-weight:bold;transform:scaleX(0.9341);transform-origin:1.00px 0">Conversion to UTC with: America/Los_Angeles</div>
<div class="t" id="t62" style="left:534.00px;top:1222.16px;font-size:29.58px;line-height:29.58px;color:#0d1530;font-weight:bold;transform:scaleX(0.9019);transform-origin:1.00px 0">GENDER</div>
<div class="t" id="t63" style="left:534.00px;top:1257.52px;font-size:22.19px;line-height:22.19px;color:#848b94;transform:scaleX(0.9367);transform-origin:1.00px 0">[VARCHAR]</div>
<div class="t" id="t64" style="left:1080.60px;top:1221.09px;font-size:25.88px;line-height:25.88px;color:#0d1530;letter-spacing:-0.151px;-webkit-text-stroke:0.35px #0d1530">The GENDER column is a categorical variable with no detected issues or cleaning</div>
<div class="t" id="t65" style="left:1079.60px;top:1253.09px;font-size:25.88px;line-height:25.88px;color:#0d1530;letter-spacing:0.007px;-webkit-text-stroke:0.35px #0d1530">operations applied. It contains data for 100,000 clients with no missing values. There are</div>
<div class="t" id="t66" style="left:1080.60px;top:1285.09px;font-size:25.88px;line-height:25.88px;color:#0d1530;letter-spacing:0.095px;-webkit-text-stroke:0.35px #0d1530">three unique categories: 'F', 'M', and 'XNA'. The most frequent category is 'F',...</div>
<div class="t" id="t67" style="left:1080.60px;top:1327.96px;font-size:21.66px;line-height:21.66px;color:#2f6bd9;transform:scaleX(0.9654);transform-origin:0.00px 0;-webkit-text-stroke:0.25px #2f6bd9">Show more</div>
<div class="t" id="t68" style="left:2134.60px;top:1222.09px;font-size:25.88px;line-height:25.88px;color:#8a9099;letter-spacing:0.111px;-webkit-text-stroke:0.2px #8a9099">No cleaning steps applied.</div>
<div class="t" id="t69" style="left:534.00px;top:1410.16px;font-size:29.58px;line-height:29.58px;color:#0d1530;font-weight:bold;transform:scaleX(0.9046);transform-origin:1.00px 0">FLAG_OWN_CAR</div>
<div class="t" id="t70" style="left:534.00px;top:1445.52px;font-size:22.19px;line-height:22.19px;color:#848b94;transform:scaleX(0.9367);transform-origin:1.00px 0">[VARCHAR]</div>
<div class="t" id="t71" style="left:1080.60px;top:1409.09px;font-size:25.88px;line-height:25.88px;color:#0d1530;letter-spacing:-0.165px;-webkit-text-stroke:0.35px #0d1530">The column "FLAG_OWN_CAR" is a categorical variable indicating whether a client owns</div>
<div class="t" id="t72" style="left:1079.60px;top:1441.09px;font-size:25.88px;line-height:25.88px;color:#0d1530;letter-spacing:0.002px;-webkit-text-stroke:0.35px #0d1530">a car, with no detected issues or cleaning operations applied. The raw data analysis</div>
<div class="t" id="t73" style="left:1080.60px;top:1473.09px;font-size:25.88px;line-height:25.88px;color:#0d1530;letter-spacing:-0.011px;-webkit-text-stroke:0.35px #0d1530">shows that out of 100,000 entries, there are no missing values, and the data is split int...</div>
<div class="t" id="t74" style="left:1080.60px;top:1515.96px;font-size:21.66px;line-height:21.66px;color:#2f6bd9;transform:scaleX(0.9654);transform-origin:0.00px 0;-webkit-text-stroke:0.25px #2f6bd9">Show more</div>
<div class="t" id="t75" style="left:2134.60px;top:1410.09px;font-size:25.88px;line-height:25.88px;color:#8a9099;letter-spacing:0.111px;-webkit-text-stroke:0.2px #8a9099">No cleaning steps applied.</div>
<div class="t" id="t76" style="left:534.00px;top:1598.16px;font-size:29.58px;line-height:29.58px;color:#0d1530;font-weight:bold;transform:scaleX(0.9147);transform-origin:1.00px 0">FLAG_OWN_REALTY</div>
<div class="t" id="t77" style="left:534.00px;top:1633.52px;font-size:22.19px;line-height:22.19px;color:#848b94;transform:scaleX(0.9367);transform-origin:1.00px 0">[VARCHAR]</div>
<div class="t" id="t78" style="left:1080.60px;top:1597.09px;font-size:25.88px;line-height:25.88px;color:#0d1530;letter-spacing:-0.185px;-webkit-text-stroke:0.35px #0d1530">The column "FLAG_OWN_REALTY" is a categorical variable indicating whether a client</div>
<div class="t" id="t79" style="left:1079.60px;top:1629.09px;font-size:25.88px;line-height:25.88px;color:#0d1530;letter-spacing:0.011px;-webkit-text-stroke:0.35px #0d1530">owns a house or flat, with no detected issues or cleaning operations applied. The raw</div>
<div class="t" id="t80" style="left:1079.60px;top:1661.09px;font-size:25.88px;line-height:25.88px;color:#0d1530;letter-spacing:0.029px;-webkit-text-stroke:0.35px #0d1530">data consists of 100,000 entries with no missing values. There are two unique...</div>
<div class="t" id="t81" style="left:1080.60px;top:1703.96px;font-size:21.66px;line-height:21.66px;color:#2f6bd9;transform:scaleX(0.9654);transform-origin:0.00px 0;-webkit-text-stroke:0.25px #2f6bd9">Show more</div>
<div class="t" id="t82" style="left:2134.60px;top:1598.09px;font-size:25.88px;line-height:25.88px;color:#8a9099;letter-spacing:0.111px;-webkit-text-stroke:0.2px #8a9099">No cleaning steps applied.</div>
<div class="t" id="t83" style="left:534.00px;top:1786.16px;font-size:29.58px;line-height:29.58px;color:#0d1530;font-weight:bold;transform:scaleX(0.9223);transform-origin:1.00px 0">CNT_CHILDREN</div>
<div class="t" id="t84" style="left:534.00px;top:1821.52px;font-size:22.19px;line-height:22.19px;color:#848b94;letter-spacing:0.024px">[INT]</div>
<div class="t" id="t85" style="left:1080.60px;top:1785.09px;font-size:25.88px;line-height:25.88px;color:#0d1530;letter-spacing:-0.205px;-webkit-text-stroke:0.35px #0d1530">The column "CNT_CHILDREN" represents the number of children a client has and is of</div>
<div class="t" id="t86" style="left:1079.60px;top:1817.09px;font-size:25.88px;line-height:25.88px;color:#0d1530;letter-spacing:0.077px;-webkit-text-stroke:0.35px #0d1530">integer type with no detected issues or cleaning operations applied. The exploratory</div>
<div class="t" id="t87" style="left:1079.60px;top:1849.09px;font-size:25.88px;line-height:25.88px;color:#0d1530;letter-spacing:0.046px;-webkit-text-stroke:0.35px #0d1530">data analysis on the raw data shows that the column is numeric with 100,000 non-...</div>
<div class="t" id="t88" style="left:1080.60px;top:1891.96px;font-size:21.66px;line-height:21.66px;color:#2f6bd9;transform:scaleX(0.9654);transform-origin:0.00px 0;-webkit-text-stroke:0.25px #2f6bd9">Show more</div>
<div class="t" id="t89" style="left:2134.60px;top:1786.09px;font-size:25.88px;line-height:25.88px;color:#8a9099;letter-spacing:0.111px;-webkit-text-stroke:0.2px #8a9099">No cleaning steps applied.</div>
<div class="t" id="t90" style="left:534.00px;top:1974.16px;font-size:29.58px;line-height:29.58px;color:#0d1530;font-weight:bold;transform:scaleX(0.9373);transform-origin:1.00px 0">INCOME_TYPE</div>
<div class="t" id="t91" style="left:534.00px;top:2009.52px;font-size:22.19px;line-height:22.19px;color:#848b94;transform:scaleX(0.9367);transform-origin:1.00px 0">[VARCHAR]</div>
<div class="t" id="t92" style="left:1080.60px;top:1973.09px;font-size:25.88px;line-height:25.88px;color:#0d1530;letter-spacing:-0.176px;-webkit-text-stroke:0.35px #0d1530">The INCOME_TYPE column is a categorical variable with 8 unique categories,</div>
<div class="t" id="t93" style="left:1079.60px;top:2005.09px;font-size:25.88px;line-height:25.88px;color:#0d1530;letter-spacing:0.114px;-webkit-text-stroke:0.35px #0d1530">representing different types of client income such as businessman, working, maternity</div>
<div class="t" id="t94" style="left:2134.60px;top:1974.09px;font-size:25.88px;line-height:25.88px;color:#8a9099;letter-spacing:0.111px;-webkit-text-stroke:0.2px #8a9099">No cleaning steps applied.</div>
</body></html>
